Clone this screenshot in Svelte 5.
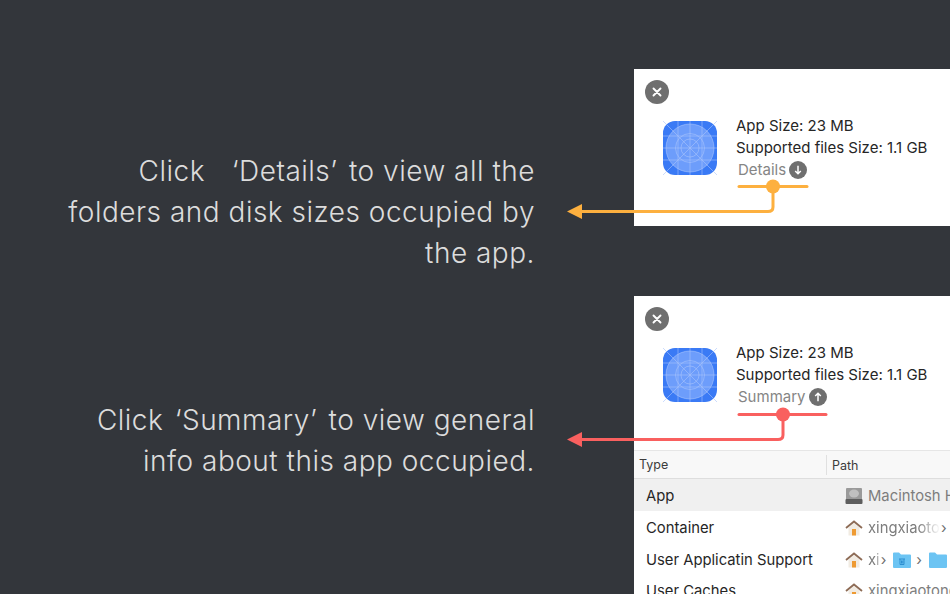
<script>
  const rows = [
    { type: 'App', selected: true, cells: [{ icon: 'disk', text: 'Macintosh HD' }] },
    { type: 'Container', cells: [{ icon: 'home', text: 'xingxiaoto', fade: true, sep: true }] },
    {
      type: 'User Applicatin Support',
      cells: [
        { icon: 'home', text: 'xi', fade: true, sep: true },
        { icon: 'trash', sep: true },
        { icon: 'folder' }
      ]
    },
    { type: 'User Caches', cells: [{ icon: 'home', text: 'xingxiaotong' }] }
  ];
</script>

{#snippet appIcon()}
  <svg class="app-icon" viewBox="0 0 54 54" width="54" height="54">
    <rect width="54" height="54" rx="12" fill="#3a7af5" />
    <circle cx="27" cy="27" r="24" fill="#6d9dfb" />
    <g fill="none" stroke="#a9c5fb" stroke-width="0.6">
      <circle cx="27" cy="27" r="24" />
      <circle cx="27" cy="27" r="14.5" />
      <circle cx="27" cy="27" r="9" />
      <path d="M0 0L54 54M54 0L0 54M27 0V54M0 27H54M15 0V54M39 0V54M0 15H54M0 39H54" />
    </g>
  </svg>
{/snippet}

{#snippet summary(label, up)}
  <button class="close" aria-label="Close">
    <svg viewBox="0 0 24 24" width="24" height="24">
      <path d="M8.500 8.500L15.500 15.500M15.500 8.500L8.500 15.500" stroke="#fff" stroke-width="1.9" stroke-linecap="round" />
    </svg>
  </button>
  <div class="summary">
    {@render appIcon()}
    <div class="info">
      <div>App Size: 23 MB</div>
      <div>Supported files Size: 1.1 GB</div>
      <div class="toggle">
        <span>{label}</span>
        <svg viewBox="0 0 18 18" width="18" height="18">
          <circle cx="9" cy="9" r="9" fill="#6f6f6f" />
          <path
            d={up ? 'M9 13.2V5.5M6.2 8L9 5.2L11.8 8' : 'M9 4.8V12.5M6.2 10L9 12.8L11.8 10'}
            fill="none"
            stroke="#fff"
            stroke-width="1.5"
          />
        </svg>
      </div>
    </div>
  </div>
{/snippet}

{#snippet pathIcon(name)}
  {#if name === 'disk'}
    <svg viewBox="0 0 18 18" width="18" height="18">
      <rect x="1" y="1" width="16" height="12" rx="1" fill="#9a9a9a" />
      <ellipse cx="9" cy="6.5" rx="5" ry="4" fill="#c0c0c0" />
      <rect x="0.5" y="12" width="17" height="5" rx="1" fill="#5d5d5d" />
    </svg>
  {:else if name === 'home'}
    <svg viewBox="0 0 18 18" width="18" height="18">
      <path d="M3.5 8.5V16.5H14.5V8.5L9 4Z" fill="#f1ebe2" />
      <path d="M1 9L9 2.5L17 9" fill="none" stroke="#8d6b55" stroke-width="1.8" />
      <rect x="7" y="10" width="4" height="6.5" fill="#ee9a32" />
    </svg>
  {:else}
    <svg viewBox="0 0 18 16" width="18" height="16">
      <path d="M0 3V1.5Q0 .5 1 .5H6L8 2.5H17Q18 2.5 18 3.5V15Q18 16 17 16H1Q0 16 0 15Z" fill="#6cc4f3" />
      {#if name === 'trash'}
        <path d="M6 7H12M7 7V12.5H11V7M8.5 8.5V11.5M9.8 8.5V11.5" fill="none" stroke="#2d8fd0" stroke-width="1" />
      {/if}
    </svg>
  {/if}
{/snippet}

<main class="page">
  <section class="row first">
    <p class="caption">Click <span class="wide">&nbsp;</span><span class="open">‘</span>Details<span class="shut">’</span> to view all the<br />folders and disk sizes occupied by<br />the app.</p>
    <div class="panel">
      {@render summary('Details', false)}
    </div>
  </section>

  <section class="row second">
    <p class="caption">Click <span class="open">‘</span>Summary<span class="shut">’</span> to view general<br />info about this app occupied.</p>
    <div class="panel">
      {@render summary('Summary', true)}
      <div class="table">
        <div class="head">
          <div class="col-type">Type</div>
          <div class="col-path">Path</div>
        </div>
        {#each rows as row}
          <div class="tr" class:selected={row.selected}>
            <div class="td-type">{row.type}</div>
            <div class="td-path">
              {#each row.cells as cell}
                {@render pathIcon(cell.icon)}
                {#if cell.text}<span class:fade={cell.fade}>{cell.text}</span>{/if}
                {#if cell.sep}<i class="sep">›</i>{/if}
              {/each}
            </div>
          </div>
        {/each}
      </div>
    </div>
  </section>

  <svg class="arrows" viewBox="0 0 950 594" width="950" height="594">
    <g fill="none" stroke="#fdb03f" stroke-width="3" stroke-linecap="round">
      <path d="M739 186.500H807" />
      <path d="M773 186V207Q773 211.500 768 211.500H580" />
    </g>
    <circle cx="773" cy="186.500" r="7" fill="#fdb03f" />
    <path d="M567 211.500L582 204V219Z" fill="#fdb03f" />

    <g fill="none" stroke="#f9605f" stroke-width="3" stroke-linecap="round">
      <path d="M739 414.500H826" />
      <path d="M783 414V435Q783 439.500 778 439.500H580" />
    </g>
    <circle cx="783" cy="414.500" r="7" fill="#f9605f" />
    <path d="M567 439.500L582 432V447Z" fill="#f9605f" />
  </svg>
</main>

<style>
  :global(body) {
    margin: 0;
    background: #33363b;
  }
  .page {
    position: relative;
    width: 950px;
    height: 594px;
    overflow: hidden;
    box-sizing: border-box;
    padding-top: 69px;
    font-family: Inter, "Liberation Sans", sans-serif;
  }
  .row {
    display: flex;
    align-items: flex-start;
  }
  .first {
    height: 157px;
    margin-bottom: 70px;
  }
  .caption {
    width: 535px;
    flex: none;
    margin: 0 99px 0 0;
    text-align: right;
    font-family: Inter, sans-serif;
    font-weight: 300;
    font-size: 28px;
    line-height: 41px;
    letter-spacing: 0.5px;
    color: #dcdcdc;
    white-space: nowrap;
  }
  .first .caption {
    padding-top: 82px;
  }
  .second .caption {
    padding-top: 104px;
  }
  .open {
    margin-left: 3px;
  }
  .shut {
    margin-right: 3px;
  }
  .wide {
    margin-right: 7px;
  }
  .panel {
    width: 316px;
    flex: none;
    background: #fff;
    color: #262626;
    padding-top: 11px;
    box-sizing: border-box;
    min-height: 157px;
    overflow: hidden;
  }
  .second .panel {
    height: 298px;
  }
  .close {
    display: block;
    width: 24px;
    height: 24px;
    margin-left: 11px;
    padding: 0;
    border: 0;
    border-radius: 50%;
    background: #6f6f6f;
  }
  .close svg {
    display: block;
  }
  .summary {
    display: flex;
    align-items: flex-start;
    padding-left: 29px;
    margin-top: 16px;
  }
  .app-icon {
    flex: none;
    margin-top: 1px;
  }
  .info {
    margin-left: 19px;
    font-size: 15px;
    line-height: 21.500px;
    margin-top: -5px;
    white-space: nowrap;
  }
  .toggle {
    display: flex;
    align-items: center;
    gap: 3px;
    margin: 1px 0 0 2px;
    color: #858585;
    font-size: 15px;
  }
  .toggle svg {
    display: block;
  }
  .table {
    margin-top: 42px;
    font-size: 14.8px;
    white-space: nowrap;
  }
  .head {
    display: flex;
    align-items: center;
    height: 25px;
    padding-top: 2px;
    background: #f8f8f8;
    border-top: 1px solid #e6e6e6;
    border-bottom: 1px solid #dedede;
    font-size: 12.500px;
    color: #3c3c3c;
  }
  .col-type {
    width: 193px;
    box-sizing: border-box;
    padding-left: 5px;
    border-right: 1px solid #e0e0e0;
    line-height: 20px;
  }
  .col-path {
    padding-left: 5px;
  }
  .tr {
    display: flex;
    align-items: center;
    height: 31.500px;
  }
  .tr.selected {
    box-sizing: border-box;
    height: 32px;
    padding-top: 3px;
    margin-bottom: 2px;
    background: #f0f0f0;
  }
  .td-type {
    width: 211px;
    flex: none;
    box-sizing: border-box;
    padding-left: 12px;
  }
  .td-path {
    display: flex;
    align-items: center;
    gap: 5px;
    color: #7d7d7d;
  }
  .td-path svg {
    flex: none;
  }
  .fade {
    margin-right: -4px;
    -webkit-mask-image: linear-gradient(90deg, #000 70%, transparent);
    mask-image: linear-gradient(90deg, #000 70%, transparent);
  }
  .sep {
    font-style: normal;
    color: #6f6f6f;
    margin-right: 2px;
  }
  .arrows {
    position: absolute;
    left: 0;
    top: 0;
    pointer-events: none;
  }
</style>
